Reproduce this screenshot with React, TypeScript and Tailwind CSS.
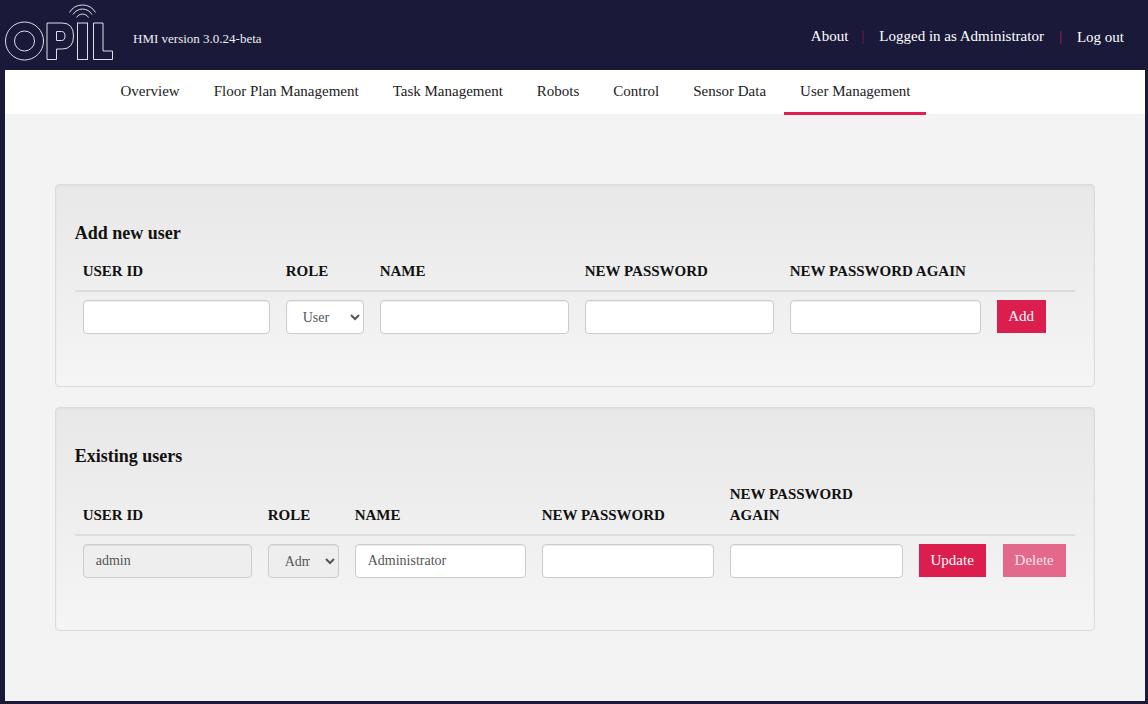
import React from 'react';

const serif = '[font-family:"Liberation_Serif",serif]';

const navItems = ['Overview', 'Floor Plan Management', 'Task Management', 'Robots', 'Control', 'Sensor Data', 'User Management'];

const Logo: React.FC = () => (
    <svg width="116" height="62" viewBox="0 0 116 62" fill="none" stroke="#dfdfe6" strokeWidth="1" className="shrink-0">
        {/* wifi arcs */}
        <path d="M69.500 12.500 A15 15 0 0 1 95.500 12.500" />
        <path d="M73 14.500 A11 11 0 0 1 92 14.500" />
        <path d="M76.500 17.500 A7 7 0 0 1 88.500 17.500" />
        {/* O */}
        <circle cx="24.500" cy="41" r="19" />
        <circle cx="24.500" cy="41" r="10" />
        {/* P */}
        <path d="M47 59.500V23H62Q73.500 23 73.500 36Q73.500 49 62 49H56.500V59.500Z" />
        <path d="M56.500 31.500H61.500Q65 31.500 65 36Q65 40.500 61.500 40.500H56.500Z" />
        {/* I */}
        <rect x="77.500" y="23" width="10" height="36.500" />
        {/* L */}
        <path d="M93.500 23H103V51H112.500V59.500H93.500Z" />
    </svg>
);

const TextInput: React.FC<{ value?: string; disabled?: boolean }> = ({ value, disabled }) => (
    <input
        readOnly
        value={value ?? ''}
        disabled={disabled}
        className={`h-[34px] w-full min-w-0 rounded border border-[#ccc] px-3 text-sm text-[#555] shadow-[inset_0_1px_1px_rgba(0,0,0,0.075)] ${disabled ? 'bg-[#eee]' : 'bg-white'}`}
    />
);

const RoleSelect: React.FC<{ value: string; disabled?: boolean }> = ({ value, disabled }) => (
    <select
        disabled={disabled}
        defaultValue={value}
        className={`h-[34px] w-full min-w-0 rounded border border-[#ccc] pl-3 pr-3 text-sm text-[#555] opacity-100 shadow-[inset_0_1px_1px_rgba(0,0,0,0.075)] ${disabled ? 'bg-[#eee]' : 'bg-white'}`}
    >
        <option>{value}</option>
    </select>
);

const Panel: React.FC<{ title: string; children: React.ReactNode }> = ({ title, children }) => (
    <section className="mx-[50px] rounded border border-[#dcdcdc] bg-gradient-to-b from-[#e8e8e8] to-[#f5f5f5] px-[18.7px] pb-[37px] pt-[38px] shadow-[inset_0_1px_3px_rgba(0,0,0,0.05)]">
        <h2 className="text-lg font-bold leading-5 text-[#111]">{title}</h2>
        {children}
    </section>
);

const thClass = 'text-[15px] font-bold leading-[21px] text-[#111]';

const App: React.FC = () => (
    <div className={`flex h-[704px] flex-col bg-[#1a193a] pb-[3px] pl-[5px] pr-[3px] ${serif}`}>
        {/* top bar */}
        <header className="-ml-[5px] -mr-[3px] flex h-[70px] shrink-0 items-start">
            <Logo />
            <span className="ml-[17px] mt-[31px] text-[13px] leading-4 text-[#eee]">HMI version 3.0.24-beta</span>
            <div className="ml-auto mr-[24px] mt-[27px] flex text-[15px] leading-[18px] text-white">
                <span>About</span>
                <span className="ml-[13px] mr-[15px] text-[#7d1c40]">|</span>
                <span>Logged in as Administrator</span>
                <span className="mx-[15px] text-[#b01e48]">|</span>
                <span className="mt-px">Log out</span>
            </div>
        </header>

        {/* tabs */}
        <nav className="relative z-10 flex h-11 shrink-0 gap-0.5 bg-white pl-[99.5px]">
            {navItems.map(item => (
                <a
                    key={item}
                    className={`flex h-[45px] items-center border-b-[3px] px-4 text-[15px] text-[#222] ${item === 'User Management' ? 'border-[#e01e50]' : 'border-transparent'}`}
                >
                    {item}
                </a>
            ))}
        </nav>

        {/* content */}
        <main className="flex flex-1 flex-col gap-5 bg-[#f3f3f3] pt-[70px]">
            <Panel title="Add new user">
                <div className="grid grid-cols-[187px_78px_189px_189px_191px_49px] gap-x-4 border-b-2 border-[#ddd] px-2 pb-2 pt-[18px]">
                    <span className={thClass}>USER ID</span>
                    <span className={thClass}>ROLE</span>
                    <span className={thClass}>NAME</span>
                    <span className={thClass}>NEW PASSWORD</span>
                    <span className={thClass}>NEW PASSWORD AGAIN</span>
                </div>
                <div className="grid grid-cols-[187px_78px_189px_189px_191px_49px] items-start gap-x-4 px-2 pb-[15px] pt-2">
                    <TextInput />
                    <RoleSelect value="User" />
                    <TextInput />
                    <TextInput />
                    <TextInput />
                    <button className="h-[33px] bg-[#dc1e4e] text-[15px] text-white">Add</button>
                </div>
            </Panel>
            <Panel title="Existing users">
                <div className="grid grid-cols-[169px_71px_171px_172px_173px_68px_63px] items-end gap-x-4 border-b-2 border-[#ddd] px-2 pb-2 pt-[18px]">
                    <span className={thClass}>USER ID</span>
                    <span className={thClass}>ROLE</span>
                    <span className={thClass}>NAME</span>
                    <span className={thClass}>NEW PASSWORD</span>
                    <span className={thClass}>NEW PASSWORD AGAIN</span>
                </div>
                <div className="grid grid-cols-[169px_71px_171px_172px_173px_68px_63px] items-start gap-x-4 px-2 pb-[15px] pt-2">
                    <TextInput value="admin" disabled />
                    <RoleSelect value="Administrator" disabled />
                    <TextInput value="Administrator" />
                    <TextInput />
                    <TextInput />
                    <button className="h-[33px] w-[67px] bg-[#dc1e4e] text-[15px] text-white">Update</button>
                    <button className="h-[33px] bg-[#e4688a] text-[15px] text-[#fbe4ea]">Delete</button>
                </div>
            </Panel>
        </main>
    </div>
);

export default App;
